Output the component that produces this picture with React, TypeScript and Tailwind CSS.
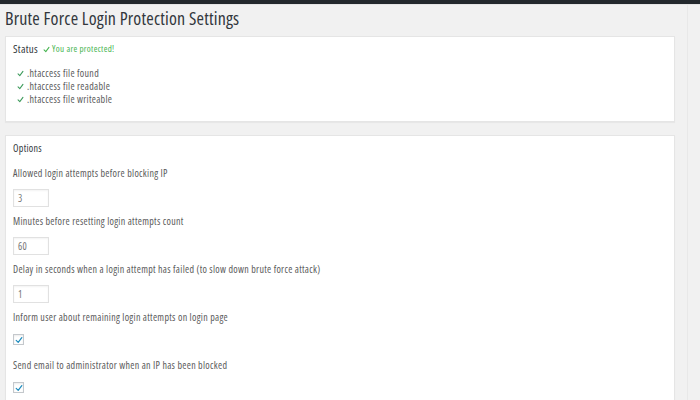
import React from "react";

const font = { fontFamily: '"Open Sans", "Liberation Sans", sans-serif' };

function Tick({ className }: { className?: string }) {
  return (
    <svg viewBox="0 0 10 10" className={className} fill="none">
      <path d="M1.5 5.5 L4 8 L8.5 2" stroke="currentColor" strokeWidth="1.5" strokeLinecap="round" strokeLinejoin="round" />
    </svg>
  );
}

function TextRow({ label, value }: { label: string; value: string }) {
  return (
    <div className="flex flex-col">
      <div className="h-[14px] leading-[14px] text-[10px] text-[#5a5a5a]">{label}</div>
      <div className="mt-[9px] mb-[7px] flex h-[18px] w-[36px] items-center border border-[#e1e1e1] bg-white pl-[4px] text-[10px] text-[#777] shadow-[inset_0_1px_2px_rgba(0,0,0,0.05)]">
        {value}
      </div>
    </div>
  );
}

function CheckRow({ label }: { label: string }) {
  return (
    <div className="flex flex-col">
      <div className="h-[14px] leading-[14px] text-[10px] text-[#5a5a5a]">{label}</div>
      <div className="mt-[10px] mb-[13px] flex h-[11px] w-[11px] items-center justify-center border border-[#c4c8cc] bg-white shadow-[inset_0_1px_2px_rgba(0,0,0,0.08)]">
        <Tick className="h-[8px] w-[8px] text-[#1e8cbe]" />
      </div>
    </div>
  );
}

export default function App() {
  const files = [".htaccess file found", ".htaccess file readable", ".htaccess file writeable"];
  return (
    <div className="h-[400px] w-[700px] overflow-hidden bg-[#f1f1f1] tracking-[0.3px] [font-stretch:75%]" style={font}>
      <div className="h-[5px] bg-[#23282d] border-b border-[#e5e5e5]" />
      <div className="flex">
        <div className="w-[675px] pl-[5px]">
          <h1 className="pt-[3px] text-[18px] leading-[20px] tracking-[0.2px] text-[#32373c]">
            Brute Force Login Protection Settings
          </h1>

          <div className="mt-[8px] border border-[#e5e5e5] bg-white px-[7px] pt-[5px] pb-[15px] shadow-[0_1px_1px_rgba(0,0,0,0.04)]">
            <div className="flex h-[14px] items-center gap-[5px]">
              <span className="text-[11px] font-medium text-[#32373c]">Status</span>
              <span className="flex items-center gap-[2px] text-[9px] text-[#46b450]">
                <Tick className="h-[7px] w-[7px]" />
                You are protected!
              </span>
            </div>
            <ul className="mt-[11px] flex flex-col pl-[4px]">
              {files.map((f) => (
                <li key={f} className="flex h-[13px] items-center gap-[3px] text-[10px] text-[#5a5a5a]">
                  <Tick className="h-[7px] w-[7px] text-[#3e9b5c]" />
                  {f}
                </li>
              ))}
            </ul>
          </div>

          <div className="mt-[13px] border border-[#e5e5e5] bg-white px-[7px] pt-[5px] pb-[20px] shadow-[0_1px_1px_rgba(0,0,0,0.04)]">
            <div className="mb-[11px] h-[14px] leading-[14px] text-[10px] font-medium text-[#32373c]">Options</div>
            <TextRow label="Allowed login attempts before blocking IP" value="3" />
            <TextRow label="Minutes before resetting login attempts count" value="60" />
            <TextRow label="Delay in seconds when a login attempt has failed (to slow down brute force attack)" value="1" />
            <CheckRow label="Inform user about remaining login attempts on login page" />
            <CheckRow label="Send email to administrator when an IP has been blocked" />
            <div className="h-[14px] leading-[14px] text-[10px] text-[#5a5a5a]">
              Message to show to blocked users (leave empty for default message)
            </div>
          </div>
        </div>
        <div className="ml-[12px] w-px self-stretch bg-[#e8e8e8]" />
      </div>
    </div>
  );
}
